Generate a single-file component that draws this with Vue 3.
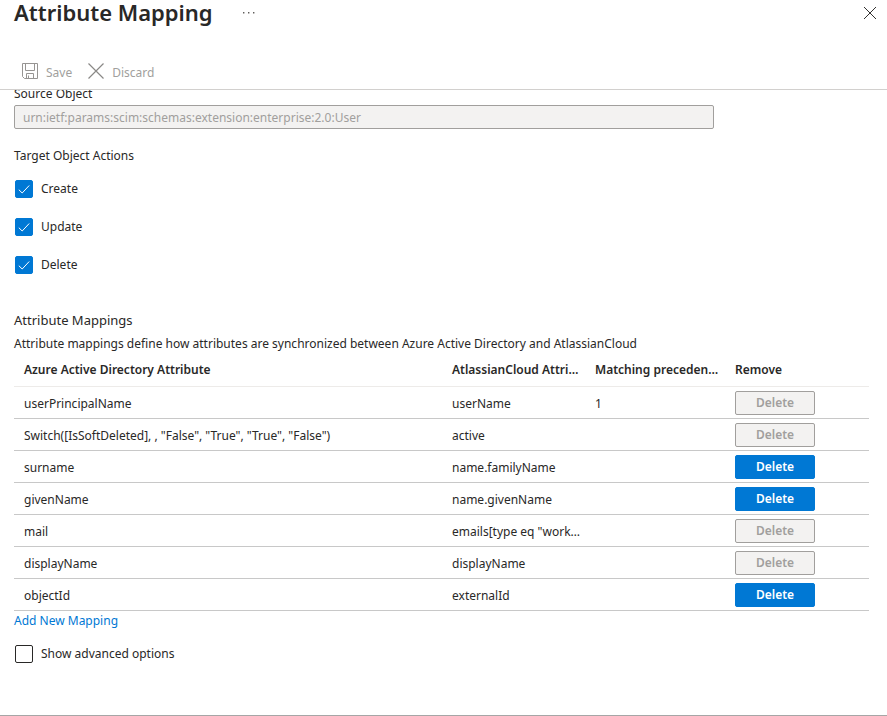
<template>
  <div class="blade">
    <!-- HEADER -->
    <header class="blade-header">
      <h1 class="blade-title">Attribute Mapping</h1>

      <button class="icon-btn more-btn" type="button" title="More">
        <svg width="12" height="2" viewBox="0 0 12 2">
          <path d="M0 0h1.4v1.4H0zM5 0h1.4v1.4H5zM10 0h1.4v1.4H10z" fill="#605e5c" />
        </svg>
      </button>

      <button class="icon-btn close-btn" type="button" title="Close">
        <svg width="14" height="14" viewBox="0 0 14 14">
          <path d="M1 1l12 12M13 1L1 13" stroke="#323130" stroke-width="1" fill="none" />
        </svg>
      </button>
    </header>

    <!-- TOOLBAR -->
    <div class="toolbar">
      <button class="toolbar-btn" type="button" disabled>
        <svg width="16" height="16" viewBox="0 0 16 16" fill="none" stroke="#979593">
          <path d="M.5 .5h15v15H2.5l-2-2z" />
          <path d="M3.5 .5v7h9v-7M4.5 15.5v-5h7v5M6.5 12.5v3" />
        </svg>
        <span>Save</span>
      </button>

      <button class="toolbar-btn" type="button" disabled>
        <svg width="16" height="16" viewBox="0 0 16 16" fill="none" stroke="#8a8886">
          <path d="M.5 .5l15 15M15.5 .5l-15 15" stroke-width="1.2" />
        </svg>
        <span>Discard</span>
      </button>
    </div>

    <!-- CONTENT -->
    <main class="blade-content">
      <label class="source-label" for="source-object">Source Object</label>
      <input
        id="source-object"
        class="source-input"
        type="text"
        :value="sourceObject"
        disabled
      />

      <fieldset class="actions">
        <legend>Target Object Actions</legend>

        <label
          v-for="action in actions"
          :key="action.name"
          class="check-row"
        >
          <input v-model="action.enabled" class="check-input" type="checkbox" />
          <span class="check-box">
            <svg width="12" height="10" viewBox="0 0 12 10">
              <path d="M.8 5.7l3.4 3.3L11.2 1.5" stroke="#fff" stroke-width="1" fill="none" />
            </svg>
          </span>
          <span>{{ action.name }}</span>
        </label>
      </fieldset>

      <h2 class="section-title">Attribute Mappings</h2>
      <p class="section-text">
        Attribute mappings define how attributes are synchronized between Azure Active Directory and AtlassianCloud
      </p>

      <table class="mappings">
        <thead>
          <tr>
            <th>Azure Active Directory Attribute</th>
            <th class="col-target">AtlassianCloud Attribute</th>
            <th class="col-matching">Matching precedence</th>
            <th class="col-remove">Remove</th>
          </tr>
        </thead>

        <tbody>
          <tr v-for="mapping in mappings" :key="mapping.source">
            <td>{{ mapping.source }}</td>
            <td>{{ mapping.target }}</td>
            <td>{{ mapping.precedence }}</td>
            <td class="cell-remove">
              <button
                class="delete-btn"
                type="button"
                :disabled="!mapping.removable"
                @click="removeMapping(mapping)"
              >
                Delete
              </button>
            </td>
          </tr>
        </tbody>
      </table>

      <a class="add-link" href="#">Add New Mapping</a>

      <label class="check-row advanced">
        <input v-model="showAdvanced" class="check-input" type="checkbox" />
        <span class="check-box">
          <svg width="12" height="10" viewBox="0 0 12 10">
            <path d="M.8 5.7l3.4 3.3L11.2 1.5" stroke="#fff" stroke-width="1" fill="none" />
          </svg>
        </span>
        <span>Show advanced options</span>
      </label>
    </main>
  </div>
</template>

<script setup>
import { ref } from 'vue'

const sourceObject = 'urn:ietf:params:scim:schemas:extension:enterprise:2.0:User'

const actions = ref([
  { name: 'Create', enabled: true },
  { name: 'Update', enabled: true },
  { name: 'Delete', enabled: true }
])

const mappings = ref([
  { source: 'userPrincipalName', target: 'userName', precedence: '1', removable: false },
  { source: 'Switch([IsSoftDeleted], , "False", "True", "True", "False")', target: 'active', removable: false },
  { source: 'surname', target: 'name.familyName', removable: true },
  { source: 'givenName', target: 'name.givenName', removable: true },
  { source: 'mail', target: 'emails[type eq "work"].value', removable: false },
  { source: 'displayName', target: 'displayName', removable: false },
  { source: 'objectId', target: 'externalId', removable: true }
])

const showAdvanced = ref(false)

const removeMapping = (mapping) => {
  mappings.value = mappings.value.filter((item) => item !== mapping)
}
</script>

<style>
body {
  margin: 0;

  background: #ffffff;
}
</style>

<style scoped>
.blade {
  box-sizing: border-box;
  min-height: 100vh;

  border-bottom: 1px solid #a6a6a6;

  color: #292827;

  font-family: "Noto Sans", "Open Sans", sans-serif;
  font-size: 12px;
  line-height: 18px;
}

/* HEADER */
.blade-header {
  height: 26px;

  padding: 0 10px 0 14px;

  display: flex;
  align-items: center;
}

.blade-title {
  margin: 0;

  padding-bottom: 2px;

  font-size: 22px;
  font-weight: 600;
  line-height: 24px;
}

.icon-btn {
  border: none;

  padding: 0;

  background: transparent;

  display: flex;
  align-items: center;
  justify-content: center;

  cursor: pointer;
}

.more-btn {
  width: 20px;
  height: 20px;

  margin-left: 26px;
}

.close-btn {
  width: 14px;
  height: 14px;

  margin-left: auto;
}

/* TOOLBAR */
.toolbar {
  padding: 36px 22px 9px;

  border-bottom: 1px solid #d2d0ce;

  display: flex;
  gap: 16px;
}

.toolbar-btn {
  border: none;

  padding: 0;

  background: transparent;
  color: #a19f9d;

  display: flex;
  align-items: center;
  gap: 8px;

  font: inherit;
}

.toolbar-btn span {
  padding-top: 4px;

  line-height: 14px;
}

/* CONTENT */
.blade-content {
  padding: 0 18px 24px 14px;

  overflow: hidden;
}

.source-label {
  display: block;

  margin-top: -5px;
}

.source-input {
  box-sizing: border-box;
  display: block;
  width: 100%;
  max-width: 700px;
  height: 24px;

  margin-top: 2px;

  border: 1px solid #a19f9d;
  border-radius: 2px;

  padding: 0 8px;

  background: #f3f2f1;
  color: #a19f9d;

  font: inherit;
}

.actions {
  margin: 18px 0 0;

  border: none;

  padding: 0;

  display: flex;
  flex-direction: column;
  gap: 20px;
}

.actions legend {
  margin-bottom: 15px;

  padding: 0;
}

/* CHECKBOXES */
.check-row {
  position: relative;

  padding-left: 1px;

  display: flex;
  align-items: center;
  gap: 8px;

  cursor: pointer;
}

.check-input {
  position: absolute;

  width: 18px;
  height: 18px;

  margin: 0;

  opacity: 0;
}

.check-box {
  box-sizing: border-box;
  width: 18px;
  height: 18px;

  border: 1px solid #292827;
  border-radius: 2px;

  display: flex;
  align-items: center;
  justify-content: center;
}

.check-box svg {
  display: none;
}

.check-input:checked + .check-box {
  border-color: #0078d4;

  background: #0078d4;
}

.check-input:checked + .check-box svg {
  display: block;
}

/* MAPPINGS */
.section-title {
  margin: 37px 0 6px;

  font-size: 13px;
  font-weight: 400;
}

.section-text {
  margin: 0;
}

.mappings {
  width: 100%;

  border-collapse: separate;
  border-spacing: 0;

  table-layout: fixed;
}

.mappings th,
.mappings td {
  box-sizing: border-box;
  height: 32px;

  border-bottom: 1px solid #c8c8c8;

  padding: 2px 4px 0 10px;

  overflow: hidden;

  text-align: left;
  text-overflow: ellipsis;
  white-space: nowrap;
}

.mappings th {
  height: 34px;

  border-bottom-color: #edebe9;

  padding-top: 0;

  font-weight: 600;
}

.mappings .cell-remove {
  padding-top: 0;
}

.col-target {
  width: 143px;
}

.col-matching {
  width: 140px;
}

.col-remove {
  width: 144px;
}

.delete-btn {
  display: block;
  width: 80px;
  height: 24px;

  border: 1px solid #0078d4;
  border-radius: 2px;

  padding: 0;

  background: #0078d4;
  color: #ffffff;

  font: inherit;
  font-weight: 600;

  cursor: pointer;
}

.delete-btn:disabled {
  border-color: #a19f9d;

  background: #f3f2f1;
  color: #a19f9d;

  cursor: default;
}

.add-link {
  display: inline-block;

  margin-top: 1px;

  color: #0078d4;

  text-decoration: none;
}

.advanced {
  margin-top: 15px;
}
</style>
